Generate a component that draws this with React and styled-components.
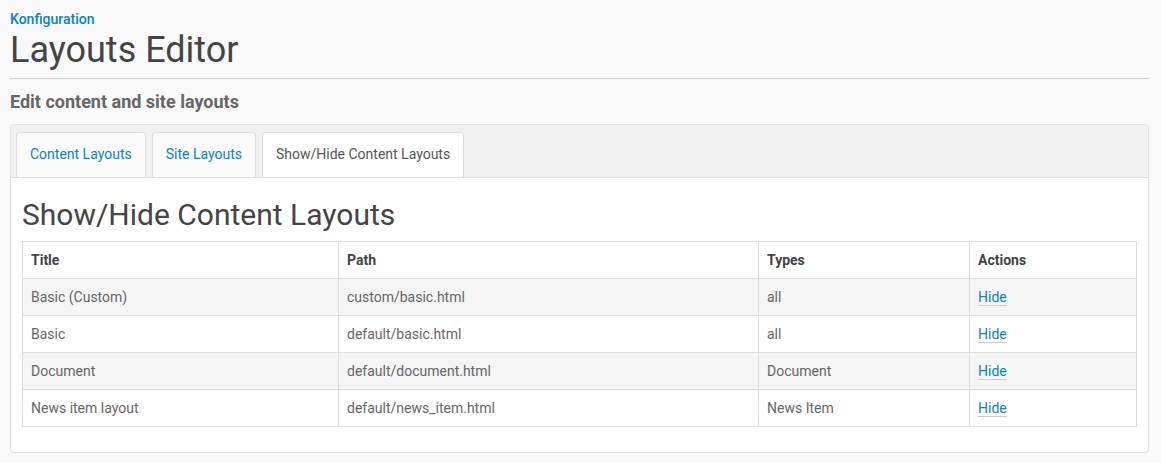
import React from "react";
import styled, { createGlobalStyle } from "styled-components";

const Global = createGlobalStyle`
  html, body { margin: 0; padding: 0; background: #f9f9f9; }
  body { font-family: Roboto, "Liberation Sans", sans-serif; color: #4d4d4d; }
  * { box-sizing: border-box; }
`;

const Page = styled.div`
  padding: 9px 12px 0 10px;
`;

const Crumb = styled.a`
  display: block;
  font-size: 14px;
  line-height: 20px;
  font-weight: 500;
  color: #0a83c0;
  text-decoration: none;
`;

const Title = styled.h1`
  margin: 2px 0 0;
  font-size: 36px;
  line-height: 1.1;
  font-weight: 400;
  color: #444;
`;

const Rule = styled.hr`
  margin: 7px 0 0;
  border: 0;
  border-top: 1px solid #ccc;
  height: 0;
`;

const Lead = styled.p`
  margin: 11px 0 0;
  font-size: 18px;
  line-height: 24px;
  font-weight: 700;
  color: #666;
`;

const Panel = styled.div`
  margin-top: 10px;
  border: 1px solid #e3e3e3;
  border-radius: 4px;
  background: #fff;
  box-shadow: 0 1px 2px rgba(0, 0, 0, 0.05);
  overflow: hidden;
`;

const TabBar = styled.div`
  display: flex;
  gap: 6px;
  padding: 7px 5px 0;
  background: #f0f0f0;
  border-bottom: 1px solid #ddd;
`;

const Tab = styled.a`
  display: block;
  height: 45px;
  padding: 0 13px;
  border: 1px solid #ddd;
  border-bottom: 0;
  border-radius: 4px 4px 0 0;
  background: ${(p) => (p.$active ? "#fff" : "#fafafa")};
  color: ${(p) => (p.$active ? "#555" : "#0a83c0")};
  font-size: 14px;
  line-height: 43px;
  text-decoration: none;
  white-space: nowrap;
`;

const Body = styled.div`
  padding: 20px 11px 25px;
`;

const SectionTitle = styled.h2`
  margin: 0 0 10px;
  font-size: 30px;
  line-height: 1.1;
  font-weight: 400;
  color: #444;
`;

const Table = styled.table`
  width: 100%;
  border-collapse: collapse;
  font-size: 14px;
  line-height: 20px;
`;

const Th = styled.th`
  text-align: left;
  padding: 8px;
  border: 1px solid #ddd;
  font-weight: 700;
  color: #444;
`;

const Td = styled.td`
  padding: 8px;
  border: 1px solid #ddd;
  color: #666;
`;

const Row = styled.tr`
  background: ${(p) => (p.$striped ? "#f5f5f5" : "#fff")};
`;

const Action = styled.a`
  color: #0a83c0;
  text-decoration: none;
  border-bottom: 1px solid #ccc;
`;

const rows = [
  ["Basic (Custom)", "custom/basic.html", "all"],
  ["Basic", "default/basic.html", "all"],
  ["Document", "default/document.html", "Document"],
  ["News item layout", "default/news_item.html", "News Item"],
];

export default function App() {
  return (
    <>
      <Global />
      <Page>
        <Crumb href="#">Konfiguration</Crumb>
        <Title>Layouts Editor</Title>
        <Rule />
        <Lead>Edit content and site layouts</Lead>
        <Panel>
          <TabBar>
            <Tab href="#">Content Layouts</Tab>
            <Tab href="#">Site Layouts</Tab>
            <Tab href="#" $active>
              Show/Hide Content Layouts
            </Tab>
          </TabBar>
          <Body>
            <SectionTitle>Show/Hide Content Layouts</SectionTitle>
            <Table>
              <colgroup>
                <col style={{ width: 316 }} />
                <col style={{ width: 420 }} />
                <col style={{ width: 211 }} />
                <col />
              </colgroup>
              <thead>
                <tr>
                  <Th>Title</Th>
                  <Th>Path</Th>
                  <Th>Types</Th>
                  <Th>Actions</Th>
                </tr>
              </thead>
              <tbody>
                {rows.map((r, i) => (
                  <Row key={r[0]} $striped={i % 2 === 0}>
                    <Td>{r[0]}</Td>
                    <Td>{r[1]}</Td>
                    <Td>{r[2]}</Td>
                    <Td>
                      <Action href="#">Hide</Action>
                    </Td>
                  </Row>
                ))}
              </tbody>
            </Table>
          </Body>
        </Panel>
      </Page>
    </>
  );
}
